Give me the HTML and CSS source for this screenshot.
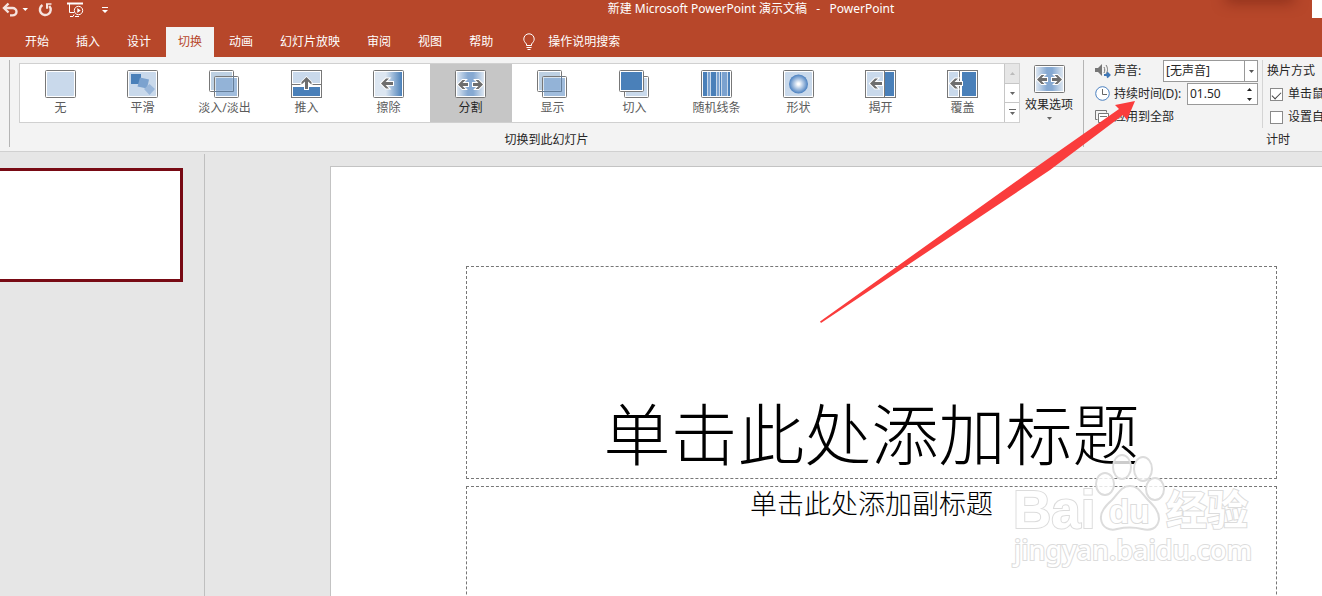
FILE: index.html
```html
<!DOCTYPE html>
<html lang="zh-CN">
<head>
    <meta charset="UTF-8">
    <meta name="viewport" content="width=device-width, initial-scale=1.0">
    <title>新建 Microsoft PowerPoint 演示文稿 - PowerPoint</title>
    <link rel="stylesheet" href="styles.css">
</head>
<body>
    <!-- 标题栏 -->
    <header class="title-bar">
        <div class="quick-access">
            <button type="button" class="undo" aria-label="撤消">
                <svg width="26" height="20" viewBox="0 0 26 20">
                    <path d="M2 8h8.500a4 3.700 0 0 1 0 7.400H8" fill="none" stroke="#f6e4df" stroke-width="2.400"/>
                    <path d="M6.500 3.500L2 8l4.500 4.500" fill="none" stroke="#f6e4df" stroke-width="2.400"/>
                    <path d="M20.500 8h5.500l-2.700 3z" fill="#fff"/>
                </svg>
            </button>
            <button type="button" class="redo" aria-label="重复">
                <svg width="16" height="20" viewBox="0 0 16 20">
                    <path d="M4.500 5a5.400 5.400 0 1 0 6.800 1" fill="none" stroke="#f6e4df" stroke-width="2.400"/>
                    <path d="M8 3.200h5.500v1.600h-3.400v4H8z" fill="#f6e4df"/>
                </svg>
            </button>
            <button type="button" class="slideshow" aria-label="从头开始">
                <svg width="18" height="20" viewBox="0 0 18 20" fill="none" stroke="#fff">
                    <path d="M0 3.500h16" stroke-width="2"/>
                    <path d="M2.500 4v8.500H7M3 16.500h3l1-2M8 16.500h4"/>
                    <circle cx="11.500" cy="10.500" r="4.200"/>
                    <path d="M10.300 8v5l3.400-2.500z" fill="#fff" stroke="none"/>
                </svg>
            </button>
            <button type="button" aria-label="自定义快速访问工具栏">
                <svg width="6" height="20" viewBox="0 0 6 20" fill="#fff"><path d="M0 7h6v1H0zM0 10h6l-3 3z"/></svg>
            </button>
        </div>
        <div class="title">新建 Microsoft PowerPoint 演示文稿 &nbsp;&nbsp;- &nbsp;&nbsp;PowerPoint</div>
        <div class="top-shadow"></div>
        <div class="corner"></div>
    </header>

    <nav class="tabs">
        <button type="button">开始</button>
        <button type="button">插入</button>
        <button type="button">设计</button>
        <button type="button" class="active">切换</button>
        <button type="button">动画</button>
        <button type="button">幻灯片放映</button>
        <button type="button">审阅</button>
        <button type="button">视图</button>
        <button type="button">帮助</button>
        <button type="button" class="tell-me">
            <svg width="12" height="18" viewBox="0 0 12 18" fill="none" stroke="#fff">
                <path d="M3.500 12.500V11C2 9.500 .8 8 .8 6a5.200 5.200 0 0 1 10.400 0c0 2-1.200 3.500-2.700 5v1.500zM3.500 14.500h5M4.500 16.500h3"/>
            </svg>
            操作说明搜索
        </button>
    </nav>

    <!-- 功能区 -->
    <section class="ribbon">
        <div class="group transitions">
            <div class="group-body">
                <div class="gallery">
                    <button type="button">
                        <svg class="icon" viewBox="0 0 31 28">
                            <rect class="frame" x=".5" y=".5" width="30" height="27" rx="1"/>
                            <rect class="pale" x="2" y="2" width="27" height="24" rx="1"/>
                        </svg>
                        无
                    </button>
                    <button type="button">
                        <svg class="icon" viewBox="0 0 31 28">
                            <rect class="frame" x=".5" y=".5" width="30" height="27" rx="1"/>
                            <rect class="pale" x="2" y="2" width="27" height="24" rx="1"/>
                            <rect class="blue" x="4" y="4" width="10" height="10"/>
                            <path d="M13 7.500l9 2-2 9-9.500-2z" fill="#7ba2cf"/>
                            <path d="M22.500 14l5.500 5-5.500 6-5.500-6z" fill="#9ab7da"/>
                        </svg>
                        平滑
                    </button>
                    <button type="button">
                        <svg class="icon" viewBox="0 0 31 28">
                            <rect class="frame" x=".5" y=".5" width="24" height="21" rx="1"/>
                            <rect x="2" y="2" width="21" height="18" fill="#bdd0e2"/>
                            <rect class="frame" x="5.500" y="6.500" width="24" height="21" rx="1" fill-opacity=".4"/>
                            <rect x="7" y="8" width="21" height="18" fill="#6f9acb" fill-opacity=".65"/>
                            <path d="M5 21.500h19.500V6" fill="none" stroke="#657f9b"/>
                        </svg>
                        淡入/淡出
                    </button>
                    <button type="button">
                        <svg class="icon" viewBox="0 0 31 28">
                            <rect class="frame" x=".5" y=".5" width="30" height="27"/>
                            <rect class="pale" x="2" y="2" width="27" height="11"/>
                            <rect class="blue" x="2" y="17" width="27" height="9"/>
                            <path d="M1 14.500h30" stroke="#777"/>
                            <path d="M15.500 6l6 6v3.500h-3.500v4.500h-5v-4.500H9.500V12z" fill="#fff"/>
                            <path class="arrow" d="M15.500 7l5 5v2.500l-3.500-3V19h-3v-7.500l-3.500 3V12z"/>
                        </svg>
                        推入
                    </button>
                    <button type="button">
                        <svg class="icon" viewBox="0 0 31 28">
                            <defs>
                                <linearGradient id="wipe"><stop offset=".4" stop-color="#dce6f1"/><stop offset="1" stop-color="#4a80b9"/></linearGradient>
                            </defs>
                            <rect class="frame" x=".5" y=".5" width="30" height="27" rx="1"/>
                            <rect x="2" y="2" width="27" height="24" fill="url(#wipe)"/>
                            <path class="arrow outlined" d="M8 13.500l5-5h3L12.500 12H20v3h-7.500l3.500 3.500h-3z"/>
                        </svg>
                        擦除
                    </button>
                    <button type="button" class="selected">
                        <svg class="icon" viewBox="0 0 31 28">
                            <defs>
                                <linearGradient id="split"><stop offset="0" stop-color="#dce6f1"/><stop offset=".4" stop-color="#86a9d2"/><stop offset=".6" stop-color="#86a9d2"/><stop offset="1" stop-color="#dce6f1"/></linearGradient>
                            </defs>
                            <rect class="frame" x=".5" y=".5" width="30" height="27" rx="1"/>
                            <rect x="2" y="2" width="27" height="24" fill="url(#split)"/>
                            <g class="arrow outlined">
                                <path d="M3 14.500l4.500-4.500h3l-3 3H13v3H7.500l3 3h-3z"/>
                                <path d="M28 14.500l-4.500-4.500h-3l3 3H18v3h5.500l-3 3h3z"/>
                            </g>
                        </svg>
                        分割
                    </button>
                    <button type="button">
                        <svg class="icon" viewBox="0 0 31 28">
                            <rect class="frame" x=".5" y=".5" width="24" height="21" rx="1"/>
                            <rect x="2" y="2" width="21" height="18" fill="#bdd0e2"/>
                            <rect class="frame" x="5.500" y="6.500" width="24" height="21" rx="1" fill-opacity=".4"/>
                            <rect x="7" y="8" width="21" height="18" fill="#6f9acb" fill-opacity=".65"/>
                            <path d="M5 21.500h19.500V6" fill="none" stroke="#657f9b"/>
                        </svg>
                        显示
                    </button>
                    <button type="button">
                        <svg class="icon" viewBox="0 0 31 28">
                            <rect class="frame" x="5.500" y="6.500" width="24" height="21" rx="1"/>
                            <rect class="pale" x="7" y="8" width="21" height="18"/>
                            <rect class="frame" x=".5" y=".5" width="24" height="21" rx="1"/>
                            <rect class="blue" x="2" y="2" width="21" height="18"/>
                        </svg>
                        切入
                    </button>
                    <button type="button">
                        <svg class="icon" viewBox="0 0 31 28">
                            <rect class="frame" x=".5" y=".5" width="30" height="27" rx="1"/>
                            <rect class="blue" x="2" y="2" width="27" height="24"/>
                            <path d="M6 2h1v24H6zM9 2h1v24H9zM15 2h1v24h-1zM18 2h1v24h-1zM20 2h1v24h-1zM26 2h1v24h-1z" fill="#c9d9eb"/>
                            <path d="M7 2h2v24H7zM16 2h2v24h-2zM21 2h5v24h-5z" fill="#7ba2cf"/>
                        </svg>
                        随机线条
                    </button>
                    <button type="button">
                        <svg class="icon" viewBox="0 0 31 28">
                            <defs>
                                <radialGradient id="ball"><stop offset=".1" stop-color="#fff"/><stop offset="1" stop-color="#4a80c0"/></radialGradient>
                            </defs>
                            <rect class="frame" x=".5" y=".5" width="30" height="27" rx="1"/>
                            <rect class="pale" x="2" y="2" width="27" height="24" rx="1"/>
                            <circle cx="15.500" cy="14" r="9.500" fill="url(#ball)"/>
                        </svg>
                        形状
                    </button>
                    <button type="button">
                        <svg class="icon" viewBox="0 0 31 28">
                            <rect class="frame" x=".5" y=".5" width="30" height="27"/>
                            <rect class="pale" x="2" y="2" width="16" height="24"/>
                            <rect class="blue" x="20" y="2" width="9" height="24"/>
                            <path d="M19.500 1v27" stroke="#777"/>
                            <path class="arrow outlined" d="M5 13.500l5-5h3L9.500 12H17v3H9.500l3.500 3.500h-3z"/>
                        </svg>
                        揭开
                    </button>
                    <button type="button">
                        <svg class="icon" viewBox="0 0 31 28">
                            <rect class="frame" x=".5" y=".5" width="30" height="27"/>
                            <rect class="pale" x="2" y="2" width="9" height="24"/>
                            <rect class="blue" x="15" y="2" width="14" height="24"/>
                            <path d="M12.500 1v27" stroke="#777"/>
                            <path class="arrow outlined" d="M3 13.500l5-5h3L7.500 12H15v3H7.500l3.500 3.500H8z"/>
                        </svg>
                        覆盖
                    </button>
                    <div class="gallery-scroll">
                        <button type="button" disabled aria-label="上一行"><svg width="5" height="3" viewBox="0 0 5 3"><path d="M0 3h5L2.500 0z" fill="#bbb"/></svg></button>
                        <button type="button" aria-label="下一行"><svg width="5" height="3" viewBox="0 0 5 3"><path d="M0 0h5L2.500 3z" fill="#666"/></svg></button>
                        <button type="button" aria-label="其他"><svg width="7" height="7" viewBox="0 0 7 7"><path d="M0 0h7v1H0zM1 3h5L3.500 6z" fill="#666"/></svg></button>
                    </div>
                </div>
                <button type="button" class="effect-options">
                    <svg class="icon" viewBox="0 0 31 28">
                        <rect class="frame" x=".5" y=".5" width="30" height="27" rx="1"/>
                        <rect x="2" y="2" width="27" height="24" fill="url(#split)"/>
                        <g class="arrow outlined">
                            <path d="M3 14.500l4.500-4.500h3l-3 3H13v3H7.500l3 3h-3z"/>
                            <path d="M28 14.500l-4.500-4.500h-3l3 3H18v3h5.500l-3 3h3z"/>
                        </g>
                    </svg>
                    效果选项
                    <svg width="5" height="3" viewBox="0 0 5 3"><path d="M0 0h5L2.500 3z" fill="#666"/></svg>
                </button>
            </div>
            <div class="group-name">切换到此幻灯片</div>
        </div>

        <div class="group timing">
            <div class="group-body">
                <div class="timing-fields">
                    <div class="row">
                        <svg width="16" height="16" viewBox="0 0 16 16">
                            <path d="M0 5h3l4-4v12L3 9H0z" fill="#777"/>
                            <path d="M9 4c1 2 1 4 0 6M11 2c2 3 2 6 0 9" fill="none" stroke="#777"/>
                            <path d="M9 12h5M12 9.500l2.500 2.500-2.500 2.500" fill="none" stroke="#3f77b6" stroke-width="2"/>
                        </svg>
                        <label for="sound">声音:</label>
                        <div class="select-box">
                            <select id="sound"><option>[无声音]</option></select>
                            <span class="drop"><svg width="5" height="3" viewBox="0 0 5 3"><path d="M0 0h5L2.500 3z" fill="#555"/></svg></span>
                        </div>
                    </div>
                    <div class="row">
                        <svg width="16" height="16" viewBox="0 0 16 16" fill="none">
                            <circle cx="7.500" cy="7.500" r="6.800" fill="#fff" stroke="#4a80c0"/>
                            <path d="M7.500 3v5.500H12" stroke="#666"/>
                        </svg>
                        <label for="duration">持续时间(D):</label>
                        <div class="spinner">
                            <input type="text" id="duration" value="01.50">
                            <div class="spin-buttons">
                                <button type="button" aria-label="增加"><svg width="5" height="3" viewBox="0 0 5 3"><path d="M0 3h5L2.500 0z" fill="#222"/></svg></button>
                                <button type="button" aria-label="减少"><svg width="5" height="3" viewBox="0 0 5 3"><path d="M0 0h5L2.500 3z" fill="#222"/></svg></button>
                            </div>
                        </div>
                    </div>
                    <button type="button" class="row apply-all">
                        <svg width="16" height="16" viewBox="0 0 16 16" fill="none" stroke="#777">
                            <path d="M2.500 10.500h-2v-9h11v2"/>
                            <path d="M3.500 4.500h10v9h-10zM5 7.500h7" fill="#fff"/>
                        </svg>
                        应用到全部
                    </button>
                </div>
                <div class="advance">
                    <div class="row">换片方式</div>
                    <label class="row check"><input type="checkbox" checked>单击鼠</label>
                    <label class="row check"><input type="checkbox">设置自</label>
                </div>
            </div>
            <div class="group-name">计时</div>
        </div>
    </section>

    <!-- 编辑区 -->
    <main class="workspace">
        <aside class="thumbnails">
            <div class="thumbnail"></div>
        </aside>
        <div class="stage">
            <div class="slide">
                <div class="placeholder slide-title">单击此处添加标题</div>
                <div class="placeholder slide-subtitle">单击此处添加副标题</div>
            </div>
        </div>
    </main>

    <svg class="pointer" width="320" height="226" viewBox="0 0 320 226">
        <path d="M0 222.500L212 71 299 10l-4-4 20-4-8 19-4-5L230 71 1 224z" fill="#fa3c3c"/>
    </svg>

    <svg class="watermark" width="250" height="120" viewBox="0 0 250 120">
        <g class="mark">
            <text class="brand" x="3" y="76">Bai</text>
            <ellipse cx="95" cy="32" rx="9" ry="11"/>
            <ellipse cx="112" cy="15" rx="9" ry="12"/>
            <ellipse cx="133" cy="17" rx="9" ry="12"/>
            <ellipse cx="145" cy="37" rx="9" ry="11"/>
            <path d="M120 34c-9 0-12 8-18 14-7 6-12 12-11 19 1 9 9 12 16 10 9-2 17-2 25 0 8 2 16 0 17-10 0-8-5-13-11-19-6-6-9-14-18-14z"/>
            <text class="du" x="99" y="71">du</text>
            <text class="cn" x="156" y="73">经验</text>
            <text class="site" x="4" y="108">jingyan.baidu.com</text>
        </g>
    </svg>
</body>
</html>
```
FILE: styles.css
```css
* {
    box-sizing: border-box;
}

body {
    margin: 0;
    height: 100vh;
    display: flex;
    flex-direction: column;
    overflow: hidden;
    background: #e6e6e6;
    color: #262626;
    font-family: "Noto Sans", "Noto Sans CJK SC", sans-serif;
    font-size: 12px;
    line-height: 16px;
    white-space: nowrap;
}

button {
    margin: 0;
    padding: 0;
    border: 0;
    background: none;
    color: inherit;
    font: inherit;
    white-space: nowrap;
}

svg {
    display: block;
    flex: none;
}

/* 标题栏 */
.title-bar {
    position: relative;
    display: flex;
    flex: none;
    height: 27px;
    background: #b7472a;
    color: #fff;
}

.quick-access {
    display: flex;
    align-items: flex-start;
    width: 180px;
    padding-left: 2px;
}

.undo {
    margin-right: 10px;
}

.redo {
    margin-right: 13px;
}

.slideshow {
    margin-right: 17px;
}

.title {
    flex: 1;
    text-align: center;
    line-height: 18px;
}

.top-shadow {
    position: absolute;
    top: -6px;
    right: 32px;
    width: 60px;
    height: 4px;
    box-shadow: 0 0 14px 4px rgba(90, 20, 10, 0.5);
}

.corner {
    position: absolute;
    top: 0;
    right: 0;
    width: 10px;
    height: 18px;
    background: #fff;
}

/* 选项卡 */
.tabs {
    display: flex;
    flex: none;
    gap: 3px;
    height: 30px;
    padding-left: 13px;
    background: #b7472a;
    color: #fff;
}

.tabs button {
    padding: 0 12px;
}

.tabs .active {
    background: #f3f3f3;
    color: #b7472a;
}

.tabs .tell-me {
    display: flex;
    align-items: center;
    gap: 13px;
    padding: 0 15px;
}

/* 功能区 */
.ribbon {
    display: flex;
    flex: none;
    height: 95px;
    padding: 3px 0 4px 9px;
    border-bottom: 1px solid #d0d0d0;
    background: #f3f3f3;
    overflow: hidden;
}

.group {
    display: flex;
    flex: none;
    flex-direction: column;
    border-left: 1px solid #b5b5b5;
}

.group-body {
    display: flex;
    flex: 1;
    align-items: flex-start;
}

.group-name {
    height: 15px;
    text-align: center;
}

.transitions {
    width: 1074px;
}

.gallery {
    display: flex;
    height: 60px;
    margin: 3px 0 0 9px;
    border: 1px solid #d0d0d0;
    background: #fff;
    color: #5c5c5c;
}

.gallery > button {
    display: flex;
    flex-direction: column;
    align-items: center;
    gap: 2px;
    width: 82px;
    padding: 6px 1px 0 0;
}

.gallery > .selected {
    background: #c6c6c6;
    color: #262626;
}

.icon {
    width: 31px;
    height: 28px;
}

.frame {
    fill: #fff;
    stroke: #777;
}

.pale {
    fill: #c9d9eb;
}

.blue {
    fill: #4a80b9;
}

.arrow {
    fill: #6e6e6e;
}

.outlined {
    stroke: #fff;
    stroke-width: 2;
    paint-order: stroke;
}

.gallery-scroll {
    display: flex;
    flex-direction: column;
    width: 15px;
    border-left: 1px solid #c6c6c6;
}

.gallery-scroll button {
    display: flex;
    flex: 1;
    align-items: center;
    justify-content: center;
}

.gallery-scroll button + button {
    border-top: 1px solid #c6c6c6;
}

.gallery-scroll button:disabled {
    background: #e6e6e6;
}

.effect-options {
    display: flex;
    flex-direction: column;
    align-items: center;
    gap: 4px;
    margin-left: 5px;
    padding-top: 5px;
}

/* 计时 */
.timing {
    width: 389px;
}

.timing-fields {
    display: flex;
    flex-direction: column;
    gap: 1px;
    width: 174px;
    padding-left: 11px;
}

.row {
    display: flex;
    align-items: center;
    gap: 3px;
    height: 22px;
}

.select-box {
    position: relative;
    width: 95px;
    height: 22px;
    margin-left: auto;
}

.select-box select {
    width: 100%;
    height: 100%;
    padding: 0 2px;
    border: 1px solid #999;
    border-radius: 0;
    appearance: none;
    background: #fff;
    color: #262626;
    font: inherit;
}

.drop {
    position: absolute;
    top: 0;
    right: 0;
    bottom: 0;
    display: flex;
    align-items: center;
    justify-content: center;
    width: 14px;
    border-left: 1px solid #999;
    pointer-events: none;
}

.spinner {
    display: flex;
    width: 71px;
    height: 22px;
    margin-left: auto;
    border: 1px solid #999;
    background: #fff;
}

.spinner input {
    flex: 1;
    min-width: 0;
    padding: 0 2px;
    border: 0;
    background: none;
    color: #262626;
    font: inherit;
}

.spin-buttons {
    display: flex;
    flex-direction: column;
    width: 15px;
}

.spin-buttons button {
    display: flex;
    flex: 1;
    align-items: center;
    justify-content: center;
}

.advance {
    display: flex;
    flex-direction: column;
    gap: 1px;
    margin-left: 4px;
    padding-left: 4px;
    border-left: 1px solid #d4d4d4;
}

.check {
    gap: 5px;
    padding-left: 3px;
}

.check input {
    display: grid;
    place-items: center;
    width: 13px;
    height: 13px;
    margin: 0;
    border: 1px solid #8a8a8a;
    appearance: none;
    background: #fff;
}

.check input:checked::before {
    content: "";
    width: 8px;
    height: 4px;
    border: solid #444;
    border-width: 0 0 1px 1px;
    transform: rotate(-45deg);
}

/* 编辑区 */
.workspace {
    display: flex;
    flex: 1;
    min-height: 0;
    padding-top: 2px;
}

.thumbnails {
    flex: none;
    width: 205px;
    padding-top: 14px;
    border-right: 1px solid #bfbfbf;
}

.thumbnail {
    width: 183px;
    height: 114px;
    border: 3px solid #780a14;
    border-left: 0;
    background: #fff;
}

.stage {
    flex: 1;
    min-width: 0;
    padding: 12px 0 0 125px;
    overflow: hidden;
}

.slide {
    display: flex;
    flex-direction: column;
    gap: 7px;
    width: 1082px;
    height: 610px;
    padding: 99px 134px 60px 135px;
    border: 1px solid #c3c3c3;
    background: #fff;
    color: #000;
    font-family: "Noto Sans CJK SC", sans-serif;
    font-weight: 300;
    text-align: center;
}

.placeholder {
    border: 1px dashed #777;
}

.slide-title {
    height: 213px;
    padding-top: 114px;
    font-size: 67px;
    line-height: 100px;
}

.slide-subtitle {
    flex: 1;
    font-size: 27px;
    line-height: 32px;
}

/* 红色箭头与水印 */
.pointer {
    position: absolute;
    top: 99px;
    left: 820px;
}

.watermark {
    position: absolute;
    top: 452px;
    left: 1010px;
}

.mark {
    fill: #fff;
    fill-opacity: 0.8;
    stroke: #dcdcdc;
    stroke-width: 2;
    font-family: "Liberation Sans", sans-serif;
    font-weight: 700;
}

.mark text {
    fill-opacity: 1;
    paint-order: stroke;
}

.brand {
    font-size: 53px;
}

.du {
    font-size: 33px;
}

.cn {
    font-family: "Noto Sans CJK SC", sans-serif;
    font-size: 41px;
}

.site {
    font-family: "Noto Sans", sans-serif;
    font-size: 27px;
    font-weight: 500;
}
```
